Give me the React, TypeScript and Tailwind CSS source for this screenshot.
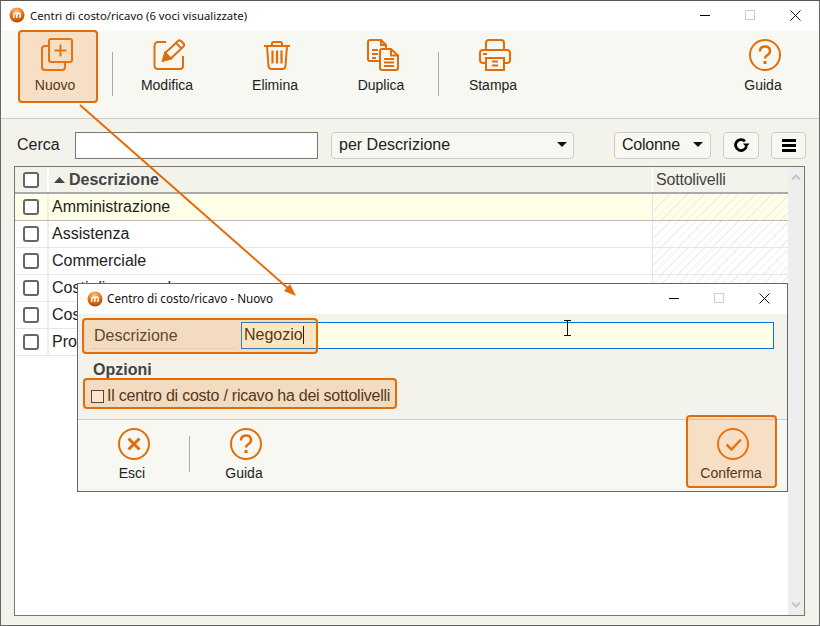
import React from "react";

const ORANGE = "#e36c0a";

function Logo({ id }: { id: string }) {
    return (
        <svg width="16" height="16" viewBox="0 0 16 16" className="shrink-0">
            <defs>
                <radialGradient id={id} cx="45%" cy="25%" r="75%">
                    <stop offset="0%" stopColor="#fbbf85" />
                    <stop offset="55%" stopColor="#e8781a" />
                    <stop offset="100%" stopColor="#a9480a" />
                </radialGradient>
            </defs>
            <circle cx="8" cy="8" r="7.5" fill={`url(#${id})`} />
            <path d="M4.500 11l.8-5M7.600 11l.6-4.600M10.800 11l.6-4.600M5.200 7c1-1.300 3-1.300 3 .2M8.300 7c1-1.300 3.200-1.300 3.100.3" stroke="#fff" strokeWidth="1.400" fill="none" />
        </svg>
    );
}

function NewIcon() {
    return (
        <svg width="34" height="34" viewBox="0 0 34 34" fill="none" stroke={ORANGE} strokeWidth="2">
            <rect x="2" y="8" width="23" height="24" rx="3" />
            <rect x="9" y="1" width="23" height="23" rx="2" fill="#f8f8f3" />
            <path d="M20.500 6.500v12M14.500 12.500h12" />
        </svg>
    );
}

function EditIcon() {
    return (
        <svg width="34" height="34" viewBox="0 0 34 34" fill="none" stroke={ORANGE} strokeWidth="2">
            <path d="M14 4H6a3.500 3.500 0 0 0-3.500 3.500V28A3 3 0 0 0 6 31h22a3 3 0 0 0 3-3V18" />
            <path d="M11 22.500l2.200-7.500L26 3q1.500-1.200 3 0l2.500 2.500q1.300 1.500 0 3L18.800 20.500z" />
            <path d="M11 22.500l2.200-7.500 5.600 5.500z" fill={ORANGE} />
            <path d="M24 5l5.500 5.500" />
        </svg>
    );
}

function TrashIcon() {
    return (
        <svg width="28" height="30" viewBox="0 0 28 30" fill="none" stroke={ORANGE} strokeWidth="2">
            <path d="M1 6h26M9 6V3.500Q9 2 10.500 2h7Q19 2 19 3.500V6" />
            <path d="M4 6l1.500 20q.3 3 3 3h11q2.700 0 3-3L24 6" />
            <path d="M9.500 10.500v13M14 10.500v13M18.500 10.500v13" strokeWidth="2.200" />
        </svg>
    );
}

function DuplicateIcon() {
    return (
        <svg width="34" height="34" viewBox="0 0 34 34" fill="none" stroke={ORANGE} strokeWidth="2">
            <path d="M14 23H4q-2 0-2-2V4q0-2 2-2h11l5 5v3" />
            <path d="M15 2v5h5M6 12h6M6 16h6M6 20h4" />
            <path d="M16 11h9l7 6.500V30q0 2-2 2H16q-2 0-2-2V13q0-2 2-2z" fill="#f8f8f3" />
            <path d="M25 11v6.500h7M18 21h10M18 24.500h10M18 28h10" />
        </svg>
    );
}

function PrintIcon() {
    return (
        <svg width="34" height="34" viewBox="0 0 34 34" fill="none" stroke={ORANGE} strokeWidth="2">
            <path d="M8 12V5q0-3 3-3h12q3 0 3 3v7" />
            <path d="M8 25H5q-3 0-3-3V15q0-3 3-3h24q3 0 3 3v7q0 3-3 3h-3" />
            <path d="M7 20h20" />
            <path d="M8 20h18v12H8z" />
            <path d="M5 16h4M14 23.500h6M14 27.500h6" />
        </svg>
    );
}

function HelpIcon() {
    return (
        <svg width="34" height="34" viewBox="0 0 34 34" fill="none" stroke={ORANGE} strokeWidth="2">
            <circle cx="17" cy="17" r="15" />
            <path d="M12 13.500q0-5 5-5t5 4.500q0 2.500-2.500 4T17 20.500" strokeWidth="2.500" />
            <path d="M17 23v3" strokeWidth="3" />
        </svg>
    );
}

function CloseCircleIcon() {
    return (
        <svg width="34" height="34" viewBox="0 0 34 34" fill="none" stroke={ORANGE} strokeWidth="2">
            <circle cx="17" cy="17" r="15" />
            <path d="M11.500 11.500l11 11M22.500 11.500l-11 11" strokeWidth="3" />
        </svg>
    );
}

function CheckCircleIcon() {
    return (
        <svg width="34" height="34" viewBox="0 0 34 34" fill="none" stroke={ORANGE} strokeWidth="2">
            <circle cx="17" cy="17" r="15" />
            <path d="M10.500 17.500l5 5 9.500-10" strokeWidth="2.500" />
        </svg>
    );
}

function Caret() {
    return (
        <svg width="10" height="6" viewBox="0 0 10 6" className="shrink-0">
            <path d="M0 0h10L5 5z" fill="#111" />
        </svg>
    );
}

function WindowControls() {
    return (
        <div className="flex items-center gap-[35px] -mt-[2px]">
            <div className="w-[10px] h-px bg-black" />
            <div className="w-[10px] h-[10px] border border-[#ccc]" />
            <svg width="11" height="11" viewBox="0 0 11 11" stroke="#111" strokeWidth="1">
                <path d="M.5.5l10 10M10.500.5l-10 10" />
            </svg>
        </div>
    );
}

function ToolButton({ label, icon, className, compact }: { label: string; icon: React.ReactNode; className: string; compact?: boolean }) {
    return (
        <div className={`flex flex-col items-center w-[80px] ${className}`}>
            <div className="h-[34px] pl-[3px] flex items-center justify-center">{icon}</div>
            <span className={`${compact ? "mt-[3px]" : "mt-[4px]"} text-sm leading-[18px] text-[#222]`}>{label}</span>
        </div>
    );
}

function RowCheck() {
    return <div className="w-[16px] h-[16px] rounded-[3px] border-2 border-[#666] bg-white" />;
}

const hatch = "bg-[repeating-linear-gradient(135deg,#efefe8_0,#efefe8_1px,transparent_1px,transparent_6px)]";

function TableRow({ label, selected }: { label: string; selected?: boolean }) {
    return (
        <div className={`flex h-[27px] border-b ${selected ? "bg-[#ffffe8] border-[#bbb]" : "border-[#e6e6e6]"}`}>
            <div className="w-[34px] flex items-center justify-center border-r-2 border-[#eee]">
                <RowCheck />
            </div>
            <div className="flex-1 pl-[3px] text-base leading-[25px] text-[#222]">{label}</div>
            <div className={`w-[136px] border-l border-[#e6e6e6] ${hatch}`} />
        </div>
    );
}

export default function App() {
    return (
        <div className="relative w-[820px] h-[626px] overflow-hidden flex flex-col border border-[#666] border-t-[#555] bg-[#f3f3ec] font-['Liberation_Sans',sans-serif]">
            {/* Title bar */}
            <div className="h-[30px] shrink-0 bg-white flex items-center pl-[8px] pr-[18px]">
                <div className="-mt-[2px]"><Logo id="logoMain" /></div>
                <span className="ml-[5px] text-[11.35px] text-[#111] font-['Noto_Sans',sans-serif]">Centri di costo/ricavo (6 voci visualizzate)</span>
                <div className="ml-auto"><WindowControls /></div>
            </div>

            {/* Toolbar */}
            <div className="h-[88px] shrink-0 bg-[#f8f8f3] border-b border-[#ccc] flex items-start pl-[17px] pt-[7px]">
                <ToolButton label="Nuovo" icon={<NewIcon />} className="-translate-x-[3px]" />
                <div className="w-px h-[44px] mt-[14px] ml-[14px] bg-[#aaa]" />
                <ToolButton label="Modifica" icon={<EditIcon />} className="ml-[14px]" />
                <ToolButton label="Elimina" icon={<TrashIcon />} className="ml-[28px]" />
                <ToolButton label="Duplica" icon={<DuplicateIcon />} className="ml-[26px]" />
                <div className="w-px h-[44px] mt-[14px] ml-[17px] bg-[#aaa]" />
                <ToolButton label="Stampa" icon={<PrintIcon />} className="ml-[14px]" />
                <ToolButton label="Guida" icon={<HelpIcon />} className="ml-[190px]" />
            </div>

            {/* Search row */}
            <div className="flex items-center h-[28px] mt-[12px] ml-[16px] text-base text-[#222] shrink-0">
                <span className="w-[58px]">Cerca</span>
                <div className="w-[243px] h-[27px] border border-[#777] bg-white" />
                <div className="ml-[13px] w-[243px] h-[27px] flex items-center justify-between pl-[7px] pr-[6px] rounded border border-[#ccc] bg-[#f8f8f3]">
                    <span>per Descrizione</span>
                    <Caret />
                </div>
                <div className="ml-[40px] w-[97px] h-[27px] flex items-center justify-between pl-[7px] pr-[7px] rounded border border-[#ccc] bg-[#f8f8f3]">
                    <span className="tracking-[-0.25px]">Colonne</span>
                    <Caret />
                </div>
                <div className="ml-[12px] w-[36px] h-[27px] flex items-center justify-center rounded border border-[#ccc] bg-[#f8f8f3]">
                    <svg width="17" height="14" viewBox="0 0 17 14" fill="none">
                        <path d="M13.400 8.500A5.500 5.500 0 1 1 12 3.200" stroke="#000" strokeWidth="2.800" />
                        <path d="M10 5.500h6.500L13.300 9.500z" fill="#000" />
                    </svg>
                </div>
                <div className="ml-[12px] w-[35px] h-[27px] flex flex-col items-center justify-center gap-[2px] rounded border border-[#ccc] bg-[#f8f8f3]">
                    <div className="w-[14px] h-[3px] bg-black" />
                    <div className="w-[14px] h-[3px] bg-black" />
                    <div className="w-[14px] h-[3px] bg-black" />
                </div>
            </div>

            {/* Table */}
            <div className="flex ml-[13px] mt-[7px] w-[791px] h-[450px] border border-[#777] bg-white">
                <div className="flex-1 flex flex-col">
                    <div className="flex h-[27px] bg-[#f3f3ec] border-b-2 border-[#aaa]">
                        <div className="w-[34px] flex items-center justify-center border-r-2 border-white">
                            <RowCheck />
                        </div>
                        <div className="flex-1 flex items-center pl-[5px] gap-[4px] text-base font-bold text-[#444]">
                            <svg width="11" height="6" viewBox="0 0 11 6"><path d="M5.500 0L11 6H0z" fill="#444" /></svg>
                            Descrizione
                        </div>
                        <div className="w-[136px] pl-[3px] border-l border-white text-base tracking-[-0.2px] leading-[25px] text-[#444]">Sottolivelli</div>
                    </div>
                    <TableRow label="Amministrazione" selected />
                    <TableRow label="Assistenza" />
                    <TableRow label="Commerciale" />
                    <TableRow label="Costi di personale" />
                    <TableRow label="Costi generali" />
                    <TableRow label="Produzione" />
                </div>
                <div className="w-[16px] bg-[#eee] flex flex-col items-center justify-between py-[7px]">
                    <svg width="10" height="6" viewBox="0 0 10 6" fill="none" stroke="#c4c4c4" strokeWidth="2"><path d="M1 5.500L5 1.500l4 4" /></svg>
                    <svg width="10" height="6" viewBox="0 0 10 6" fill="none" stroke="#c4c4c4" strokeWidth="2"><path d="M1 .5l4 4 4-4" /></svg>
                </div>
            </div>

            {/* Dialog */}
            <div className="absolute left-[76px] top-[282px] w-[711px] h-[209px] flex flex-col border border-[#666] bg-[#f3f3ec]">
                <div className="h-[30px] shrink-0 bg-white flex items-center pl-[9px] pr-[17px]">
                    <div className="-mt-[1px]"><Logo id="logoDialog" /></div>
                    <span className="ml-[5px] text-[11.7px] -translate-x-[1px] text-[#111] font-['Noto_Sans',sans-serif]">Centro di costo/ricavo - Nuovo</span>
                    <div className="ml-auto"><WindowControls /></div>
                </div>
                <div className="h-[106px] shrink-0 border-b border-[#ccc] pl-[13px] pt-[8px] text-base text-[#333]">
                    <div className="flex items-start h-[27px]">
                        <div className="w-[144px] h-[27px] pl-[3px] pt-[1px] leading-[26px] border-b border-[#ddd]">Descrizione</div>
                        <div className="ml-[6px] w-[533px] h-[27px] border border-[#0078d7] bg-[#ffffe8] pl-[2px] leading-[23px] flex text-[#222]">
                            Negozio
                            <div className="w-px h-[18px] mt-[3px] bg-black" />
                        </div>
                    </div>
                    <div className="mt-[11px] pl-[2px] font-bold leading-[20px] text-[#444]">Opzioni</div>
                    <div className="flex items-center mt-[4px] text-[#222]">
                        <div className="w-[13px] h-[13px] border border-[#333] bg-white" />
                        <span className="ml-[3px] tracking-[-0.24px]">Il centro di costo / ricavo ha dei sottolivelli</span>
                    </div>
                </div>
                <div className="flex-1 bg-[#f8f8f3] flex items-start pt-[7px] pl-[14px] pr-[16px]">
                    <ToolButton label="Esci" icon={<CloseCircleIcon />} className="" compact />
                    <div className="w-px h-[36px] mt-[9px] ml-[17px] bg-[#aaa]" />
                    <ToolButton label="Guida" icon={<HelpIcon />} className="ml-[14px]" compact />
                    <ToolButton label="Conferma" icon={<CheckCircleIcon />} className="ml-auto" compact />
                </div>
            </div>

            {/* Callouts over the window */}
            <div className="absolute left-[17px] top-[29px] w-[80px] h-[73px] rounded border-2 border-[#e36c0a] bg-[#f58a24]/22" />
            <div className="absolute left-[81px] top-[317px] w-[236px] h-[36px] rounded border-2 border-[#e36c0a] bg-[#f58a24]/22" />
            <div className="absolute left-[82px] top-[377px] w-[314px] h-[31px] rounded border-2 border-[#e36c0a] bg-[#f58a24]/22" />
            <div className="absolute left-[685px] top-[414px] w-[91px] h-[73px] rounded border-2 border-[#e36c0a] bg-[#f58a24]/22" />

            {/* Arrow */}
            <svg className="absolute left-0 top-0 pointer-events-none" width="820" height="626" fill="none">
                <path d="M79 104L289 289" stroke="#e36c0a" strokeWidth="2" />
                <path d="M295 295L283 290L289 283z" fill="#e36c0a" />
            </svg>

            {/* Text cursor */}
            <svg className="absolute left-[562px] top-[319px]" width="9" height="16" viewBox="0 0 9 16" fill="none" stroke="#111">
                <path d="M1 .5h7M1 15.500h7M4.500 1v14" />
            </svg>
        </div>
    );
}
